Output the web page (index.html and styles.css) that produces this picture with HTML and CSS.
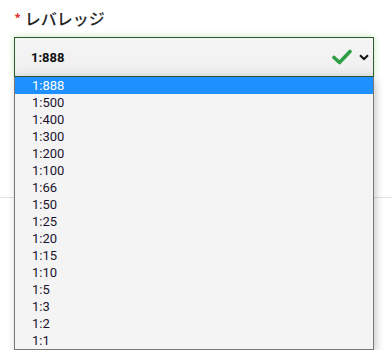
FILE: index.html
```html
<!DOCTYPE html>
<html lang="ja">
<head>
    <meta charset="UTF-8">
    <meta name="viewport" content="width=device-width, initial-scale=1.0">
    <title>レバレッジ</title>
    <link rel="stylesheet" href="styles.css">
</head>
<body>

    <div class="field">
        <div class="field-label"><span class="req">*</span> レバレッジ</div>

        <div class="select-wrap">
            <div class="select-box">
                <span class="select-value">1:888</span>
                <svg class="check" width="20" height="16" viewBox="0 0 20 16">
                    <path d="M2 8.5 L7.5 13.5 L18 2.5" fill="none" stroke="#2e9e44" stroke-width="3.6" stroke-linecap="round" stroke-linejoin="round"/>
                </svg>
                <svg class="chevron" width="10" height="7" viewBox="0 0 10 7">
                    <path d="M1 1.2 L5 5 L9 1.2" fill="none" stroke="#111" stroke-width="2"/>
                </svg>
            </div>

            <!-- open option list -->
            <ul class="options">
                <li class="selected">1:888</li>
                <li>1:500</li>
                <li>1:400</li>
                <li>1:300</li>
                <li>1:200</li>
                <li>1:100</li>
                <li>1:66</li>
                <li>1:50</li>
                <li>1:25</li>
                <li>1:20</li>
                <li>1:15</li>
                <li>1:10</li>
                <li>1:5</li>
                <li>1:3</li>
                <li>1:2</li>
                <li>1:1</li>
            </ul>
        </div>

        <div class="divider"></div>
    </div>

</body>
</html>
```

FILE: styles.css
```css
body {
    margin: 0;
    background-color: #ffffff;
    font-family: Roboto, "Noto Sans CJK JP", sans-serif;
}
.field {
    position: relative;
    padding: 7px 18px 0 14px;
}
.field-label {
    font-family: "Noto Sans CJK JP", sans-serif;
    font-size: 16px;
    font-weight: 500;
    line-height: 22px;
    color: #262626;
    height: 30px;
}
.req {
    color: #e0302a;
    font-size: 15px;
}
.select-wrap {
    position: relative;
    z-index: 1;
}
.select-box {
    display: flex;
    align-items: center;
    height: 38px;
    padding: 0 4px 0 16px;
    border: 1px solid #2f5a2f;
    background: linear-gradient(#f5f5f5, #f1f1f1 75%, #e6e6e6);
    box-shadow: 0 0 6px rgba(120, 200, 100, 0.45);
}
.select-value {
    flex: 1;
    font-size: 13px;
    font-weight: bold;
    color: #111;
}
.check {
    margin-right: 7px;
}
.options {
    list-style: none;
    margin: 0;
    padding: 0;
    border: 1px solid #777;
    border-top: none;
    background-color: #f4f4f4;
    box-shadow: 2px 3px 8px rgba(0, 0, 0, 0.22);
}
.options li {
    height: 17px;
    line-height: 17px;
    padding-left: 17px;
    font-size: 13px;
    color: #1c1530;
}
.options li.selected {
    background-color: #1e90ff;
    color: #ffffff;
}
.divider {
    position: absolute;
    left: 0;
    right: 0;
    top: 197px;
    border-top: 1px solid #e2e2e2;
}
```
